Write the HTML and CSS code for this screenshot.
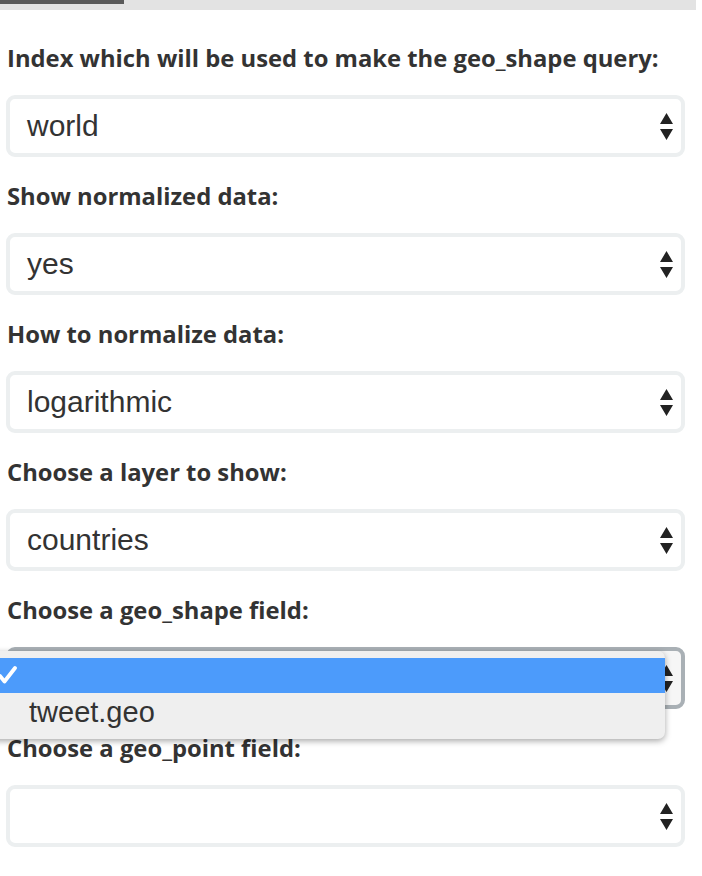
FILE: index.html
```html
<!DOCTYPE html>
<html>
<head>
<meta charset="utf-8">
<link rel="stylesheet" href="styles.css">
</head>
<body>
<div class="tabbar"><div class="tab-active"></div></div>
<form class="form">
  <div class="group">
    <label class="label">Index which will be used to make the geo_shape query:</label>
    <div class="select"><span class="value">world</span><svg class="arrows" width="13" height="27" viewBox="0 0 13 27"><path d="M6.5 0 L13 11 L0 11 Z M0 16 L13 16 L6.5 27 Z" fill="#222"/></svg></div>
  </div>
  <div class="group">
    <label class="label">Show normalized data:</label>
    <div class="select"><span class="value">yes</span><svg class="arrows" width="13" height="27" viewBox="0 0 13 27"><path d="M6.5 0 L13 11 L0 11 Z M0 16 L13 16 L6.5 27 Z" fill="#222"/></svg></div>
  </div>
  <div class="group">
    <label class="label">How to normalize data:</label>
    <div class="select"><span class="value">logarithmic</span><svg class="arrows" width="13" height="27" viewBox="0 0 13 27"><path d="M6.5 0 L13 11 L0 11 Z M0 16 L13 16 L6.5 27 Z" fill="#222"/></svg></div>
  </div>
  <div class="group">
    <label class="label">Choose a layer to show:</label>
    <div class="select"><span class="value">countries</span><svg class="arrows" width="13" height="27" viewBox="0 0 13 27"><path d="M6.5 0 L13 11 L0 11 Z M0 16 L13 16 L6.5 27 Z" fill="#222"/></svg></div>
  </div>
  <div class="group">
    <label class="label">Choose a geo_shape field:</label>
    <div class="select select-open"><span class="value"></span><svg class="arrows" width="13" height="27" viewBox="0 0 13 27"><path d="M6.5 0 L13 11 L0 11 Z M0 16 L13 16 L6.5 27 Z" fill="#222"/></svg>
      <div class="menu">
        <div class="option option-selected"><svg class="check" width="22" height="20" viewBox="0 0 22 20"><path d="M3 11 L7.5 16.5 L18 3" fill="none" stroke="#fff" stroke-width="3.8" stroke-linecap="round" stroke-linejoin="round"/></svg></div>
        <div class="option">tweet.geo</div>
      </div>
    </div>
  </div>
  <div class="group">
    <label class="label">Choose a geo_point field:</label>
    <div class="select"><span class="value"></span><svg class="arrows" width="13" height="27" viewBox="0 0 13 27"><path d="M6.5 0 L13 11 L0 11 Z M0 16 L13 16 L6.5 27 Z" fill="#222"/></svg></div>
  </div>
</form>
</body>
</html>
```
FILE: styles.css
```css
html, body {
  margin: 0;
  padding: 0;
  background: #fff;
}
.tabbar {
  width: 696px;
  height: 10px;
  background: #e3e3e3;
}
.tab-active {
  width: 124px;
  height: 4px;
  background: #5a5a5a;
}
.form {
  display: flex;
  flex-direction: column;
  padding: 33px 0 0 6px;
  width: 679px;
}
.group {
  display: flex;
  flex-direction: column;
  margin-bottom: 24px;
}
.label {
  font-family: "Open Sans", "Noto Sans", sans-serif;
  font-weight: 700;
  font-size: 23.8px;
  line-height: 30px;
  color: #333;
  margin-bottom: 22px;
  padding-left: 1px;
  white-space: nowrap;
}
.select {
  position: relative;
  box-sizing: border-box;
  height: 62px;
  border: 4px solid #eceff0;
  border-radius: 9px;
  background: #fff;
  display: flex;
  align-items: center;
  justify-content: space-between;
  padding: 0 8px 0 17px;
}
.select-open {
  border-color: #a9b0b5;
  background: #f6f6f6;
}
.value {
  font-family: "Liberation Sans", Arial, sans-serif;
  font-size: 30px;
  color: #333;
}
.arrows {
  display: block;
}
.menu {
  position: absolute;
  left: -30px;
  top: 0px;
  width: 685px;
  box-sizing: border-box;
  background: #efefef;
  border-radius: 7px;
  box-shadow: 0 2px 6px rgba(0,0,0,0.35);
  padding: 7px 0 8px 0;
  z-index: 5;
}
.option {
  height: 38px;
  display: flex;
  align-items: center;
  padding-left: 49px;
  font-family: "Liberation Sans", Arial, sans-serif;
  font-size: 29px;
  color: #333;
}
.option-selected {
  background: #4c9bfb;
  height: 35px;
  position: relative;
}
.check {
  position: absolute;
  left: 17px;
  top: 7px;
}
```
